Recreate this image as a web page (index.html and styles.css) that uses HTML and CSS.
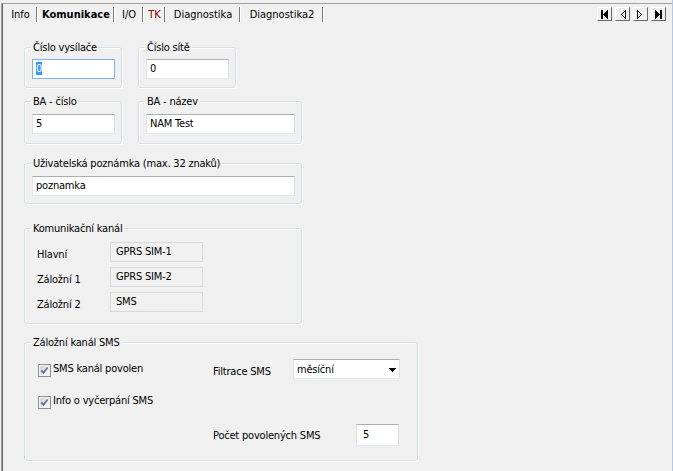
FILE: index.html
```html
<!DOCTYPE html>
<html lang="cs">
<head>
<meta charset="utf-8">
<title>Komunikace</title>
<link rel="stylesheet" href="styles.css">
</head>
<body>
<div class="frame">
  <div class="window">
    <div class="tabbar">
      <div class="tab w-info">Info</div>
      <div class="tab w-kom active">Komunikace</div>
      <div class="tab w-io">I/O</div>
      <div class="tab w-tk tk">TK</div>
      <div class="tab w-diag">Diagnostika</div>
      <div class="tab w-diag2">Diagnostika2</div>
      <div class="nav">
        <div class="navbtn"><svg width="13" height="12" viewBox="0 0 13 12" shape-rendering="crispEdges"><path d="M3 2h2v9h-2z M9 2h1v9h-1z M8 3h1v7h-1z M7 4h1v5h-1z M6 5h1v3h-1z M5 6h1v1h-1z" fill="#000"/></svg></div>
        <div class="navbtn"><svg width="13" height="12" viewBox="0 0 13 12" shape-rendering="crispEdges"><path d="M9 2h1v9h-1z M8 3h1v1h-1z M7 4h1v1h-1z M6 5h1v1h-1z M5 6h1v1h-1z M6 7h1v1h-1z M7 8h1v1h-1z M8 9h1v1h-1z" fill="#000"/></svg></div>
        <div class="navbtn"><svg width="13" height="12" viewBox="0 0 13 12" shape-rendering="crispEdges"><path d="M3 2h1v9h-1z M4 3h1v1h-1z M5 4h1v1h-1z M6 5h1v1h-1z M7 6h1v1h-1z M6 7h1v1h-1z M5 8h1v1h-1z M4 9h1v1h-1z" fill="#000"/></svg></div>
        <div class="navbtn"><svg width="13" height="12" viewBox="0 0 13 12" shape-rendering="crispEdges"><path d="M8 2h2v9h-2z M3 2h1v9h-1z M4 3h1v7h-1z M5 4h1v5h-1z M6 5h1v3h-1z M7 6h1v1h-1z" fill="#000"/></svg></div>
      </div>
    </div>

    <div class="page">
      <div class="row">
        <div class="group w-s r1">
          <div class="legend">Číslo vysílače</div>
          <div class="edit focus"><span class="sel">0</span></div>
        </div>
        <div class="group w-s r1">
          <div class="legend">Číslo sítě</div>
          <div class="edit">0</div>
        </div>
      </div>

      <div class="row mt13">
        <div class="group w-s pb9">
          <div class="legend">BA - číslo</div>
          <div class="edit">5</div>
        </div>
        <div class="group w-m pb9">
          <div class="legend">BA - název</div>
          <div class="edit">NAM Test</div>
        </div>
      </div>

      <div class="group w-l mt19">
        <div class="legend">Uživatelská poznámka (max. 32 znaků)</div>
        <div class="edit">poznamka</div>
      </div>

      <div class="group w-l mt24 pb11">
        <div class="legend">Komunikační kanál</div>
        <div class="chan">
          <div class="chan-row"><div class="chan-label">Hlavní</div><div class="ro">GPRS SIM-1</div></div>
          <div class="chan-row"><div class="chan-label">Záložní 1</div><div class="ro">GPRS SIM-2</div></div>
          <div class="chan-row"><div class="chan-label">Záložní 2</div><div class="ro">SMS</div></div>
        </div>
      </div>

      <div class="group w-xl mt18 pb14">
        <div class="legend">Záložní kanál SMS</div>
        <div class="sms">
          <div class="cb-item">
            <svg class="cb" width="13" height="13" viewBox="0 0 13 13"><defs><linearGradient id="cbg" x1="0" y1="0" x2="1" y2="1"><stop offset="0" stop-color="#d4d4d4"/><stop offset="1" stop-color="#fbfbfb"/></linearGradient></defs><rect x="0.5" y="0.5" width="12" height="12" fill="#f4f4f4" stroke="#8e8f8f"/><rect x="2" y="2" width="9" height="9" fill="url(#cbg)"/><path d="M3.3 6.4 L5.4 8.8 L9.6 3.4" fill="none" stroke="#5a6e9a" stroke-width="1.7"/></svg>
            <span class="cb-label">SMS kanál povolen</span>
          </div>
          <div class="field">
            <span class="lbl lbl-filtr">Filtrace SMS</span>
            <div class="combo"><span>měsíční</span><svg class="arrow" width="7" height="4" viewBox="0 0 7 4" shape-rendering="crispEdges"><path d="M0 0h7v1h-7z M1 1h5v1h-5z M2 2h3v1h-3z M3 3h1v1h-1z" fill="#000"/></svg></div>
          </div>
          <div class="cb-item">
            <svg class="cb" width="13" height="13" viewBox="0 0 13 13"><rect x="0.5" y="0.5" width="12" height="12" fill="#f4f4f4" stroke="#8e8f8f"/><rect x="2" y="2" width="9" height="9" fill="url(#cbg)"/><path d="M3.3 6.4 L5.4 8.8 L9.6 3.4" fill="none" stroke="#5a6e9a" stroke-width="1.7"/></svg>
            <span class="cb-label">Info o vyčerpání SMS</span>
          </div>
          <div></div>
          <div></div>
          <div class="field">
            <span class="lbl lbl-pocet">Počet povolených SMS</span>
            <div class="edit small">5</div>
          </div>
        </div>
      </div>
    </div>
  </div>
</div>
</body>
</html>
```

FILE: styles.css
```css
* { box-sizing: border-box; }
html, body { margin: 0; padding: 0; }
body {
  background: #f0f0f0;
  font-family: "DejaVu Sans Condensed", "DejaVu Sans", "Liberation Sans", sans-serif;
  font-size: 11px;
  color: #000;
}
.frame {
  width: 673px;
  height: 471px;
  padding: 3px 0 0 1px;
  border-right: 1px solid #b4c9e6;
  overflow: hidden;
}
.window {
  height: 468px;
  border-top: 1px solid #a0a0a0;
  border-left: 1px solid #a0a0a0;
  box-shadow: inset 1px 0 0 #696969;
  padding-left: 1px;
}

/* tabs */
.tabbar {
  display: flex;
  height: 21px;
  padding-top: 3px;
}
.tab {
  height: 15px;
  line-height: 15px;
  text-align: center;
  padding-left: 2px;
  border-right: 1px solid #7a7a7a;
  box-shadow: 1px 0 0 #ffffff;
  white-space: nowrap;
}
.tab.active { font-weight: bold; }
.tab.tk { color: #800000; }
.w-info { width: 34px; }
.w-kom { width: 77px; }
.w-io { width: 29px; }
.w-tk { width: 22px; }
.w-diag { width: 75px; }
.w-diag2 { width: 83px; }

.nav {
  margin-left: auto;
  margin-right: 6px;
  display: flex;
  gap: 3px;
}
.navbtn {
  width: 15px;
  height: 14px;
  border: 1px solid;
  border-color: #ffffff #696969 #696969 #ffffff;
  background: #f0f0f0;
}
.navbtn svg { display: block; }

/* page */
.page {
  padding: 22px 0 0 21px;
  letter-spacing: -0.2px;
}
.row { display: flex; gap: 16px; }
.mt13 { margin-top: 13px; }
.mt18 { margin-top: 18px; }
.mt19 { margin-top: 19px; }
.mt24 { margin-top: 24px; }

.group {
  border: 1px solid #d5dfe5;
  border-radius: 3px;
  box-shadow: inset 1px 1px 0 #ffffff, 1px 1px 0 #ffffff;
  padding: 0 6px 7px 7px;
}
.group.r1 { padding-bottom: 8px; }
.group.r1 .edit { margin-top: 5px; }
.pb9 { padding-bottom: 9px; }
.pb11 { padding-bottom: 11px; }
.pb14 { padding-bottom: 14px; }
.w-s { width: 98px; }
.w-m { width: 164px; }
.w-l { width: 278px; }
.w-xl { width: 394px; }

.legend {
  display: table;
  margin: -7px 0 0 -1px;
  padding: 0 2px;
  background: #f0f0f0;
  line-height: 13px;
  white-space: nowrap;
}

.edit {
  height: 20px;
  margin-top: 6px;
  background: #ffffff;
  border: 1px solid;
  border-color: #abadb3 #dbdfe6 #e3e9ef #e2e3ea;
  padding: 0 3px;
  line-height: 18px;
  white-space: nowrap;
}
.edit.focus { border-color: #7eb4ea; }
.sel { background: #3399ff; color: #ffffff; }

/* channel group */
.chan {
  margin: 7px 0 0 5px;
  display: flex;
  flex-direction: column;
  gap: 5px;
}
.chan-row { display: flex; align-items: flex-start; }
.chan-label {
  width: 73px;
  padding-top: 6px;
  line-height: 13px;
}
.ro {
  width: 93px;
  height: 20px;
  border: 1px solid #d9d9d9;
  padding: 2px 0 0 5px;
  line-height: 13px;
}

/* sms group */
.sms {
  display: grid;
  grid-template-columns: 175px auto;
  grid-template-rows: 20px 21px 22px;
  row-gap: 12px;
  margin: 10px 0 0 6px;
}
.cb-item { display: flex; align-items: flex-start; gap: 2px; }
.cb { display: block; margin-top: 5px; flex: none; }
.cb-label { margin-top: 3px; line-height: 13px; white-space: nowrap; }

.field { display: flex; align-items: flex-start; }
.lbl { line-height: 13px; white-space: nowrap; }
.lbl-filtr { width: 80px; margin-top: 6px; }
.lbl-pocet { width: 143px; margin-top: 5px; }

.combo {
  width: 107px;
  height: 20px;
  background: #ffffff;
  border: 1px solid;
  border-color: #abadb3 #dbdfe6 #e3e9ef #e2e3ea;
  padding: 3px 3px 2px 3px;
  line-height: 13px;
  display: flex;
  justify-content: space-between;
  align-items: flex-start;
}
.arrow { display: block; margin-top: 5px; }

.edit.small {
  width: 43px;
  height: 22px;
  margin-top: 0;
  padding-left: 6px;
  line-height: 20px;
}
```
